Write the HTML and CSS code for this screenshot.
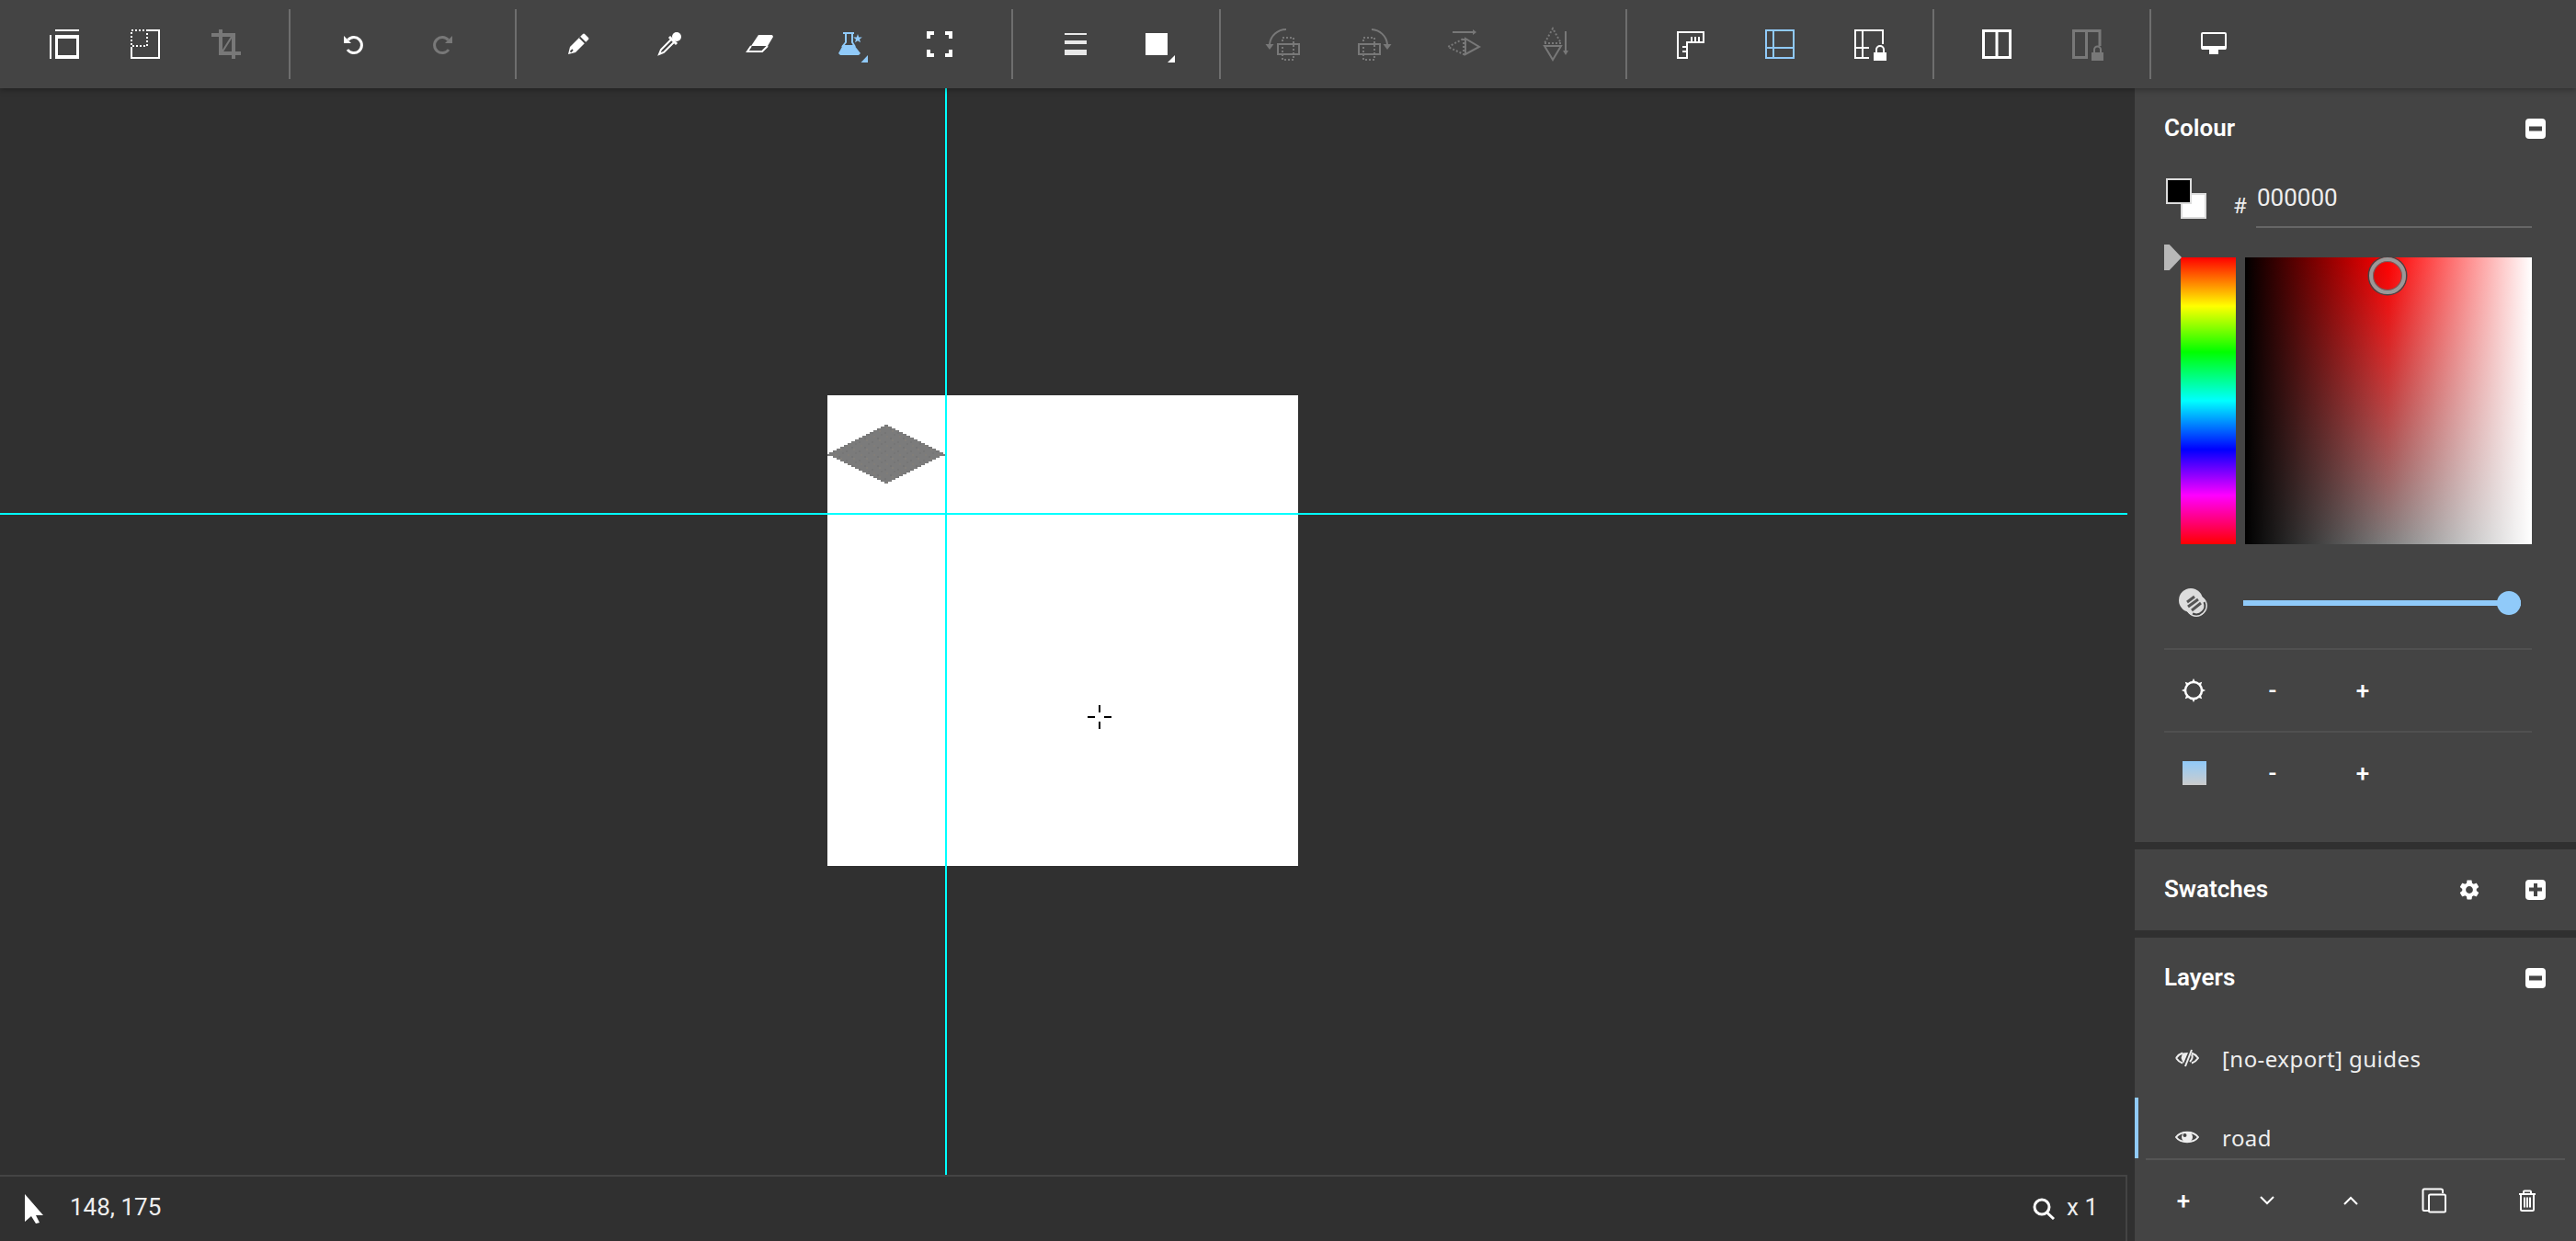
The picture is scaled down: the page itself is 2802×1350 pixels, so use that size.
FILE: index.html
```html
<!DOCTYPE html>
<html lang="en">
  <head>
    <meta charset="UTF-8" />
    <meta name="viewport" content="width=device-width, initial-scale=1.0" />
    <title>Pixel Editor</title>
    <link rel="stylesheet" href="styles.css">
  </head>
  <body>
    <!-- Top toolbar -->
    <header class="toolbar">
      <div class="group">
        <button class="tool"><svg viewBox="0 0 44 44"><path class="fill" fill-rule="evenodd" d="M6 12h2v26H6zM12 6h26v2H12zM12 12h26v26H12zM15 16v18h20V16z"/></svg></button>
        <button class="tool"><svg viewBox="0 0 44 44"><path class="line" d="M25 7H37V37H7V25"/><rect class="dots" x="7" y="7" width="17" height="17"/></svg></button>
        <button class="tool off"><svg viewBox="0 0 44 44"><path class="line w4" d="M16 6V32H38M6 12H30V38"/><path class="line" d="M18 30L28 14"/></svg></button>
      </div>
      <span class="sep"></span>
      <div class="group wide trail">
        <button class="tool"><svg viewBox="0 0 44 44"><path class="line w3" d="M16.5 17.5A8.5 8.5 0 1 1 16 28"/><polygon class="fill" points="12,13 12,21 20,21"/></svg></button>
        <button class="tool off"><svg viewBox="0 0 44 44"><g transform="matrix(-1 0 0 1 44 0)"><path class="line w3" d="M16.5 17.5A8.5 8.5 0 1 1 16 28"/><polygon class="fill" points="12,13 12,21 20,21"/></g></svg></button>
      </div>
      <span class="sep"></span>
      <div class="group wide trail">
        <button class="tool"><svg viewBox="0 0 44 44"><path class="fill" d="M10 33L12 25L26 11Q27 10 28 11L32 15Q33 16 32 17L18 31Z"/><path class="cut" d="M22.500 14.500L29 21M12.500 30.500L15 28"/></svg></button>
        <button class="tool"><svg viewBox="0 0 44 44"><circle class="fill" cx="30" cy="14" r="5"/><path class="line w3" d="M22 14L30 22"/><path class="line" d="M24 17L13 28L11 33L16 31L27 20"/></svg></button>
        <button class="tool"><svg viewBox="0 0 44 44"><polygon class="fill" points="21,12 36,12 37,14 31,24 13,24"/><path class="line" d="M13 24L9 30H25L31 24"/></svg></button>
        <button class="tool on"><svg viewBox="0 0 44 44"><path class="fill" d="M15 9H27V11H15Z"/><path class="fill" d="M15 23H27L34 32L32 34H12L10 32Z"/><path class="line" d="M18 11V20L14 25M25 11V20L28 25"/><polygon class="fill" points="31,11 32.200,14.400 35.800,14.500 33,16.700 34,20.200 31,18.200 28,20.200 29,16.700 26.200,14.500 29.800,14.400"/><polygon class="fill" points="42,34 42,42 34.500,42"/></svg></button>
        <button class="tool"><svg viewBox="0 0 44 44"><path class="line w4" d="M10 16V10H16M28 10H34V16M34 28V34H28M16 34H10V28"/></svg></button>
      </div>
      <span class="sep"></span>
      <div class="group">
        <button class="tool"><svg viewBox="0 0 44 44"><path class="soft" d="M10 10h24v2H10zM10 18h24v4H10zM10 28h24v6H10z"/></svg></button>
        <button class="tool"><svg viewBox="0 0 44 44"><path class="fill" d="M10 10h24v24H10zM42 34v8h-8z"/></svg></button>
      </div>
      <span class="sep"></span>
      <div class="group wide trail">
        <button class="tool off"><svg viewBox="0 0 44 44"><path class="line" d="M25 6A18 18 0 0 0 7 22"/><polygon class="fill" points="2.500,22 11.500,22 7,28"/><rect class="line" x="16" y="22" width="23" height="11"/><rect class="dots" x="21" y="15" width="12" height="24"/></svg></button>
        <button class="tool off"><svg viewBox="0 0 44 44"><path class="line" d="M20 6A18 18 0 0 1 37 22"/><polygon class="fill" points="32.500,22 41.500,22 37,28"/><rect class="line" x="6" y="22" width="23" height="11"/><rect class="dots" x="11" y="15" width="12" height="24"/></svg></button>
        <button class="tool off"><svg viewBox="0 0 44 44"><path class="line" d="M10 9H32"/><polygon class="fill" points="32,6 32,12 36,9"/><polygon class="line" points="24,16 24,33 39,25"/><polyline class="dots" points="22,16 22,33 5,25 22,16"/></svg></button>
        <button class="tool off"><svg viewBox="0 0 44 44"><path class="line" d="M35 8V29"/><polygon class="fill" points="32,29 38,29 35,34"/><polygon class="line" points="12,24 30,24 21,39"/><polyline class="dots" points="12,21 30,21 21,5 12,21"/></svg></button>
      </div>
      <span class="sep"></span>
      <div class="group wide">
        <button class="tool"><svg viewBox="0 0 44 44"><path class="line" d="M9 9H37V20H19V37H9ZM24 20V14M28 20V14M32 20V14M19 25H14M19 30H14"/></svg></button>
        <button class="tool on"><svg viewBox="0 0 44 44"><path class="line" d="M7 7H37V37H7ZM15 7V37M7 26H37"/></svg></button>
        <button class="tool"><svg viewBox="0 0 44 44"><path class="line" d="M36 22V7H6V37H21M14 7V37M6 26H21"/><path class="fill" d="M26 31h14v9H26z"/><path class="line" d="M29 31V28A4 4 0 0 1 37 28V31"/></svg></button>
      </div>
      <span class="sep"></span>
      <div class="group wide">
        <button class="tool"><svg viewBox="0 0 44 44"><path class="line w3" d="M7.500 7.500H36.500V36.500H7.500ZM22 7V37"/></svg></button>
        <button class="tool off"><svg viewBox="0 0 44 44"><path class="line w3" d="M23 36.500H7.500V7.500H36V24M21.500 7V37"/><path class="fill" d="M27 31h13v9H27z"/><path class="line" d="M30 31V28A3.500 3.500 0 0 1 37 28V31"/></svg></button>
      </div>
      <span class="sep"></span>
      <div class="group">
        <button class="tool"><svg viewBox="0 0 44 44"><rect class="line" x="9" y="10" width="26" height="17" rx="1"/><path class="fill" d="M9 24h26v4H9zM17 28h10v5H17z"/></svg></button>
      </div>
    </header>

    <div class="main">
      <div class="workspace">
        <div class="viewport">
          <div class="canvas">
            <svg class="tile" viewBox="0 0 128 64">
              <defs>
                <pattern id="noise" width="14" height="10" patternUnits="userSpaceOnUse">
                  <rect width="14" height="10" fill="#7b7b7b"/>
                  <rect x="2" y="0" width="2" height="2" fill="#767676"/>
                  <rect x="8" y="2" width="2" height="2" fill="#807d78"/>
                  <rect x="12" y="4" width="2" height="2" fill="#747474"/>
                  <rect x="0" y="6" width="2" height="2" fill="#827f7a"/>
                  <rect x="6" y="8" width="2" height="2" fill="#757575"/>
                </pattern>
              </defs>
              <path fill="url(#noise)" d="M62 0h4
                v2h4v2h4v2h4v2h4v2h4 v2h4v2h4v2h4v2h4v2h4 v2h4v2h4v2h4v2h4v2h4
                v2h2v2h-6
                v2h-4v2h-4v2h-4v2h-4v2h-4 v2h-4v2h-4v2h-4v2h-4v2h-4 v2h-4v2h-4v2h-4v2h-4v2h-4
                v-2h-4v-2h-4v-2h-4v-2h-4v-2h-4 v-2h-4v-2h-4v-2h-4v-2h-4v-2h-4 v-2h-4v-2h-4v-2h-4v-2h-4
                v-2h-6v-2h2
                v-2h4v-2h4v-2h4v-2h4v-2h4 v-2h4v-2h4v-2h4v-2h4v-2h4 v-2h4v-2h4v-2h4v-2h4v-2h4
                z"/>
            </svg>
            <svg class="crosshair" viewBox="0 0 28 28"><path d="M1 14H9M19 14H27M14 1V9M14 19V27"/></svg>
          </div>
          <div class="guide guide-v"></div>
          <div class="guide guide-h"></div>
        </div>
        <footer class="status">
          <div class="status-item">
            <svg class="status-arrow" viewBox="0 0 20 32"><polygon points="0,0 20,23 12,23 16,31 12,32 7,24 0,30"/></svg>
            <span class="status-text">148, 175</span>
          </div>
          <div class="status-item">
            <svg class="status-zoom" viewBox="0 0 24 24"><circle cx="10" cy="10" r="8"/><path d="M15.500 16L23 23"/></svg>
            <span class="status-text">x 1</span>
          </div>
        </footer>
      </div>

      <aside class="sidebar">
        <!-- Colour -->
        <section class="panel panel-colour">
          <div class="panel-head">
            <h2>Colour</h2>
            <span class="box-btn"><svg viewBox="0 0 22 22"><rect width="22" height="22" rx="4" class="box"/><rect x="4" y="8.500" width="14" height="5" class="box-mark"/></svg></span>
          </div>
          <div class="hex-row">
            <div class="swatch-pair"><span class="swatch-bg"></span><span class="swatch-fg"></span></div>
            <span class="hash">#</span>
            <input class="hex" type="text" value="000000" />
          </div>
          <div class="picker">
            <span class="hue-arrow"></span>
            <div class="hue"></div>
            <div class="sat"><span class="sat-handle"></span></div>
          </div>
          <div class="opacity-row">
            <svg class="opacity-icon" viewBox="0 0 32 32">
              <circle cx="13" cy="13" r="13" class="disc"/>
              <circle cx="19" cy="19" r="11.500" class="ring"/>
              <path class="stripes" d="M9 15L17 9M10 20L21 12M14 24L24 16"/>
              <path class="crescent" d="M27.500 15A9.500 9.500 0 0 1 15 27.500"/>
            </svg>
            <div class="slider"><span class="slider-knob"></span></div>
          </div>
          <div class="tweak-row">
            <span class="tweak-icon">
              <svg viewBox="0 0 26 26">
                <circle cx="13" cy="13" r="9" class="sun"/>
                <path class="rays" d="M13 0l2 4h-4zM13 26l-2-4h4zM0 13l4-2v4zM26 13l-4 2v-4zM3.800 3.800l4.200 1.400-2.800 2.800zM22.200 22.200l-4.200-1.400 2.800-2.800zM22.200 3.800l-1.400 4.200-2.800-2.800zM3.800 22.200l1.400-4.200 2.800 2.800z"/>
              </svg>
            </span>
            <button class="step">-</button>
            <button class="step">+</button>
          </div>
          <div class="tweak-row">
            <span class="tweak-icon"><span class="tint"></span></span>
            <button class="step">-</button>
            <button class="step">+</button>
          </div>
        </section>

        <!-- Swatches -->
        <section class="panel">
          <div class="panel-head">
            <h2>Swatches</h2>
            <svg class="gear" viewBox="0 0 24 24"><path d="M19.14 12.94c.04-.3.06-.61.06-.94 0-.32-.02-.64-.07-.94l2.030-1.580c.18-.14.23-.41.12-.61l-1.920-3.320c-.12-.22-.37-.29-.59-.22l-2.390.96c-.5-.38-1.030-.7-1.620-.94l-.36-2.540c-.04-.24-.24-.41-.48-.41h-3.840c-.24 0-.43.17-.47.41l-.36 2.540c-.59.24-1.130.57-1.620.94l-2.390-.96c-.22-.08-.47 0-.59.22L2.740 8.870c-.12.21-.08.47.12.61l2.030 1.580c-.05.3-.09.63-.09.94s.02.64.07.94l-2.030 1.580c-.18.14-.23.41-.12.61l1.920 3.320c.12.22.37.29.59.22l2.390-.96c.5.38 1.030.7 1.620.94l.36 2.540c.05.24.24.41.48.41h3.840c.24 0 .44-.17.47-.41l.36-2.540c.59-.24 1.130-.56 1.620-.94l2.390.96c.22.08.47 0 .59-.22l1.920-3.320c.12-.22.07-.47-.12-.61l-2.010-1.580zM12 15.600c-1.980 0-3.600-1.620-3.600-3.600s1.620-3.600 3.600-3.600 3.600 1.620 3.600 3.600-1.620 3.600-3.600 3.600z"/></svg>
            <span class="box-btn"><svg viewBox="0 0 22 22"><rect width="22" height="22" rx="4" class="box"/><path d="M4 8.500h5v-4.500h4v4.500h5v4h-5v5.500h-4v-5.500h-5z" class="box-mark"/></svg></span>
          </div>
        </section>

        <!-- Layers -->
        <section class="panel panel-layers">
          <div class="panel-head">
            <h2>Layers</h2>
            <span class="box-btn"><svg viewBox="0 0 22 22"><rect width="22" height="22" rx="4" class="box"/><rect x="4" y="8.500" width="14" height="5" class="box-mark"/></svg></span>
          </div>
          <div class="layer-list">
            <div class="layer">
              <svg class="eye" viewBox="0 0 26 20"><path class="eye-lid" d="M1 10C3 7 5 5.500 8 4.500M18 4.500C21 5.500 23 7 25 10C23 13 21 14.500 18 15.500M8 15.500C5 14.500 3 13 1 10"/><path class="eye-fill" d="M14 4L8 4.500L6.500 10L9 16Z"/><path class="eye-slash" d="M18 1L11 19"/><path class="eye-arc" d="M18 6Q20 10 16 14"/></svg>
              <span>[no-export] guides</span>
            </div>
            <div class="layer active">
              <svg class="eye" viewBox="0 0 26 20"><path class="eye-lid" d="M1 10C6 3 20 3 25 10C20 17 6 17 1 10Z"/><circle class="eye-fill" cx="13" cy="10" r="6"/><circle class="eye-glint" cx="10.500" cy="8" r="2"/></svg>
              <span>road</span>
            </div>
          </div>
          <div class="layer-actions">
            <button class="act act-plus">+</button>
            <button class="act"><svg viewBox="0 0 16 10"><path d="M1 1L8 8L15 1"/></svg></button>
            <button class="act"><svg viewBox="0 0 16 10"><path d="M1 9L8 2L15 9"/></svg></button>
            <button class="act"><svg class="copy" viewBox="0 0 28 28"><path d="M8 25H3Q1.500 25 1.500 23.500V3Q1.500 1.500 3 1.500H21Q23 1.500 23 3V6"/><rect x="8" y="7.500" width="18" height="19" rx="1.500"/></svg></button>
            <button class="act act-end"><svg class="trash" viewBox="0 0 20 24"><path class="trash-top" d="M1 5H19M6 5V2.500Q6 1.500 7 1.500H13Q14 1.500 14 2.500V5"/><path d="M3 5V21.500Q3 23 4.500 23H15.500Q17 23 17 21.500V5M7 8.500V19.500M10 8.500V19.500M13 8.500V19.500"/></svg></button>
          </div>
        </section>
      </aside>
    </div>
  </body>
</html>
```

FILE: styles.css
```css
* {
  box-sizing: border-box;
}
html,
body {
  height: 100%;
}
body {
  margin: 0;
  display: flex;
  flex-direction: column;
  overflow: hidden;
  background-color: #303030;
  color: #eee;
  font-family: Roboto, "Liberation Sans", sans-serif;
  font-size: 26px;
}
button {
  padding: 0;
  border: none;
  background: none;
  color: inherit;
  font: inherit;
  cursor: pointer;
}
svg {
  display: block;
}

/* toolbar */
.toolbar {
  position: relative;
  z-index: 1;
  flex: none;
  display: flex;
  align-items: center;
  height: 96px;
  padding-left: 26px;
  background-color: #444;
  box-shadow: 0 2px 6px rgba(0, 0, 0, 0.3);
}
.group {
  display: flex;
}
.group.wide {
  gap: 10px;
}
.group.trail {
  padding-right: 10px;
}
.sep {
  width: 2px;
  height: 76px;
  margin: 0 24px;
  background-color: #6e6e6e;
}
.tool {
  display: flex;
  align-items: center;
  justify-content: center;
  width: 88px;
  height: 44px;
  color: #fff;
}
.tool svg {
  width: 44px;
  height: 44px;
}
.tool.off {
  color: #787878;
}
.tool.on {
  color: #90caf9;
}
.fill {
  fill: currentColor;
}
.soft {
  fill: #e8e8e8;
}
.line {
  fill: none;
  stroke: currentColor;
  stroke-width: 2;
}
.line.w3 {
  stroke-width: 3;
}
.line.w4 {
  stroke-width: 4;
}
.dots {
  fill: none;
  stroke: currentColor;
  stroke-width: 2;
  stroke-dasharray: 2 2;
}
.cut {
  fill: none;
  stroke: #444;
  stroke-width: 2;
}

/* main area */
.main {
  flex: 1;
  display: flex;
  min-height: 0;
}
.workspace {
  flex: 1;
  display: flex;
  flex-direction: column;
  min-width: 0;
}
.viewport {
  position: relative;
  flex: 1;
  overflow: hidden;
}
.canvas {
  position: absolute;
  left: 900px;
  top: 334px;
  width: 512px;
  height: 512px;
  background-color: #fff;
}
.tile {
  position: absolute;
  left: 0;
  top: 32px;
  width: 128px;
  height: 64px;
  shape-rendering: crispEdges;
}
.crosshair {
  position: absolute;
  left: 282px;
  top: 336px;
  width: 28px;
  height: 28px;
  fill: none;
  stroke: #000;
  stroke-width: 2;
  shape-rendering: crispEdges;
}
.guide {
  position: absolute;
  background-color: #0ff;
}
.guide-v {
  left: 1028px;
  top: 0;
  bottom: 0;
  width: 2px;
}
.guide-h {
  left: 0;
  right: 0;
  top: 462px;
  height: 2px;
}

/* status bar */
.status {
  flex: none;
  display: flex;
  align-items: center;
  justify-content: space-between;
  height: 72px;
  padding: 0 30px 0 27px;
  border-top: 2px solid #444;
  border-right: 2px solid #444;
}
.status-item {
  display: flex;
  align-items: center;
}
.status-text {
  padding-bottom: 5px;
}
.status-arrow {
  width: 20px;
  height: 32px;
  margin-right: 29px;
  fill: #fff;
}
.status-zoom {
  width: 24px;
  height: 24px;
  margin-right: 13px;
  fill: none;
  stroke: #fff;
  stroke-width: 3;
}

/* sidebar panels */
.sidebar {
  flex: none;
  display: flex;
  flex-direction: column;
  gap: 8px;
  width: 480px;
  margin-left: 8px;
}
.panel {
  background-color: #444;
}
.panel-colour {
  height: 820px;
}
.panel-layers {
  height: 330px;
}
.panel-head {
  display: flex;
  align-items: center;
  height: 88px;
  padding: 0 33px 0 32px;
}
.panel-head h2 {
  flex: 1;
  margin: 0;
  padding-bottom: 2px;
  color: #fff;
  font-size: 26px;
  font-weight: 600;
}
.box-btn svg {
  width: 22px;
  height: 22px;
}
.box {
  fill: #fff;
}
.box-mark {
  fill: #444;
}
.gear {
  width: 26px;
  height: 26px;
  margin-right: 48px;
  fill: #fff;
}

/* colour */
.hex-row {
  display: flex;
  margin-top: 10px;
  padding-left: 32px;
}
.swatch-pair {
  position: relative;
  width: 46px;
  height: 44px;
  margin-right: 29px;
}
.swatch-fg,
.swatch-bg {
  position: absolute;
  width: 28px;
  height: 28px;
  border: 2px solid #ddd;
}
.swatch-fg {
  left: 2px;
  top: 0;
  background-color: #000;
}
.swatch-bg {
  left: 18px;
  top: 16px;
  background-color: #fff;
}
.hash {
  width: 25px;
  padding-top: 15px;
  font-size: 24px;
  line-height: 30px;
}
.hex {
  width: 300px;
  height: 54px;
  padding: 0 0 11px 1px;
  border: none;
  border-bottom: 2px solid #666;
  outline: none;
  background: none;
  color: #eee;
  font: inherit;
}
.picker {
  position: relative;
  display: flex;
  gap: 10px;
  margin-top: 32px;
  padding-left: 50px;
}
.hue-arrow {
  position: absolute;
  left: 32px;
  top: -14px;
  width: 19px;
  height: 28px;
  background-color: #b8b8b8;
  clip-path: polygon(0 0, 30% 0, 100% 50%, 30% 100%, 0 100%);
}
.hue {
  width: 60px;
  height: 312px;
  background: linear-gradient(to bottom, #f00, #ff0 17%, #0f0 33%, #0ff 50%, #00f 67%, #f0f 83%, #f00);
}
.sat {
  position: relative;
  width: 312px;
  height: 312px;
  background:
    linear-gradient(to right, #000, rgba(0, 0, 0, 0) 50%, rgba(255, 255, 255, 0) 50%, #fff),
    linear-gradient(to bottom, #f00, #808080);
}
.sat-handle {
  position: absolute;
  left: 135px;
  top: 0;
  width: 40px;
  height: 40px;
  border: 4px solid #999;
  border-radius: 50%;
  box-shadow: 0 0 0 1.500px #444, inset 0 0 0 1px #666;
}
.opacity-row {
  display: flex;
  align-items: center;
  margin-top: 48px;
  padding: 0 0 33px 48px;
}
.opacity-icon {
  width: 32px;
  height: 32px;
  margin-right: 38px;
}
.disc {
  fill: #ddd;
}
.ring {
  fill: #ddd;
  stroke: #ddd;
  stroke-width: 1;
}
.crescent {
  fill: none;
  stroke: #444;
  stroke-width: 2;
}
.stripes {
  fill: none;
  stroke: #555;
  stroke-width: 3;
}
.slider {
  position: relative;
  width: 302px;
  height: 6px;
  background-color: #90caf9;
}
.slider-knob {
  position: absolute;
  right: 0;
  top: -10px;
  width: 26px;
  height: 26px;
  border-radius: 50%;
  background-color: #90caf9;
}
.tweak-row {
  display: flex;
  align-items: center;
  width: 400px;
  height: 90px;
  margin-left: 32px;
  border-top: 2px solid #505050;
}
.tweak-icon {
  width: 69px;
  padding-left: 19px;
}
.tweak-icon svg {
  width: 26px;
  height: 26px;
}
.sun {
  fill: none;
  stroke: #fff;
  stroke-width: 2.500;
}
.rays {
  fill: #fff;
}
.tint {
  display: block;
  width: 26px;
  height: 26px;
  margin-left: 1px;
  background: linear-gradient(to bottom, #90caf9, #ccc);
}
.step {
  width: 98px;
  color: #fff;
  font-weight: 500;
  text-align: center;
}

/* layers */
.layer-list {
  height: 152px;
  overflow: hidden;
  font-family: "Noto Sans", sans-serif;
  font-size: 24px;
  letter-spacing: 0.45px;
}
.layer {
  display: flex;
  align-items: center;
  height: 86px;
  padding-left: 44px;
}
.layer.active {
  padding-left: 40px;
  border-left: 4px solid #90caf9;
}
.eye {
  width: 26px;
  height: 20px;
  margin-right: 25px;
}
.eye-lid,
.eye-arc {
  fill: none;
  stroke: #eee;
  stroke-width: 2;
}
.eye-fill {
  fill: #eee;
}
.eye-glint {
  fill: #444;
}
.eye-slash {
  fill: none;
  stroke: #eee;
  stroke-width: 2;
}
.layer-actions {
  display: flex;
  align-items: center;
  gap: 9px;
  height: 90px;
  margin: 0 12px;
  border-top: 2px solid #555;
}
.act {
  display: flex;
  align-items: center;
  justify-content: center;
  width: 82px;
  color: #fff;
}
.act-plus {
  font-weight: 500;
}
.act-end {
  margin-left: auto;
}
.act svg {
  width: 16px;
  height: 10px;
  fill: none;
  stroke: #fff;
  stroke-width: 2;
}
.act .copy {
  width: 28px;
  height: 28px;
}
.act .trash {
  width: 20px;
  height: 24px;
}
```
